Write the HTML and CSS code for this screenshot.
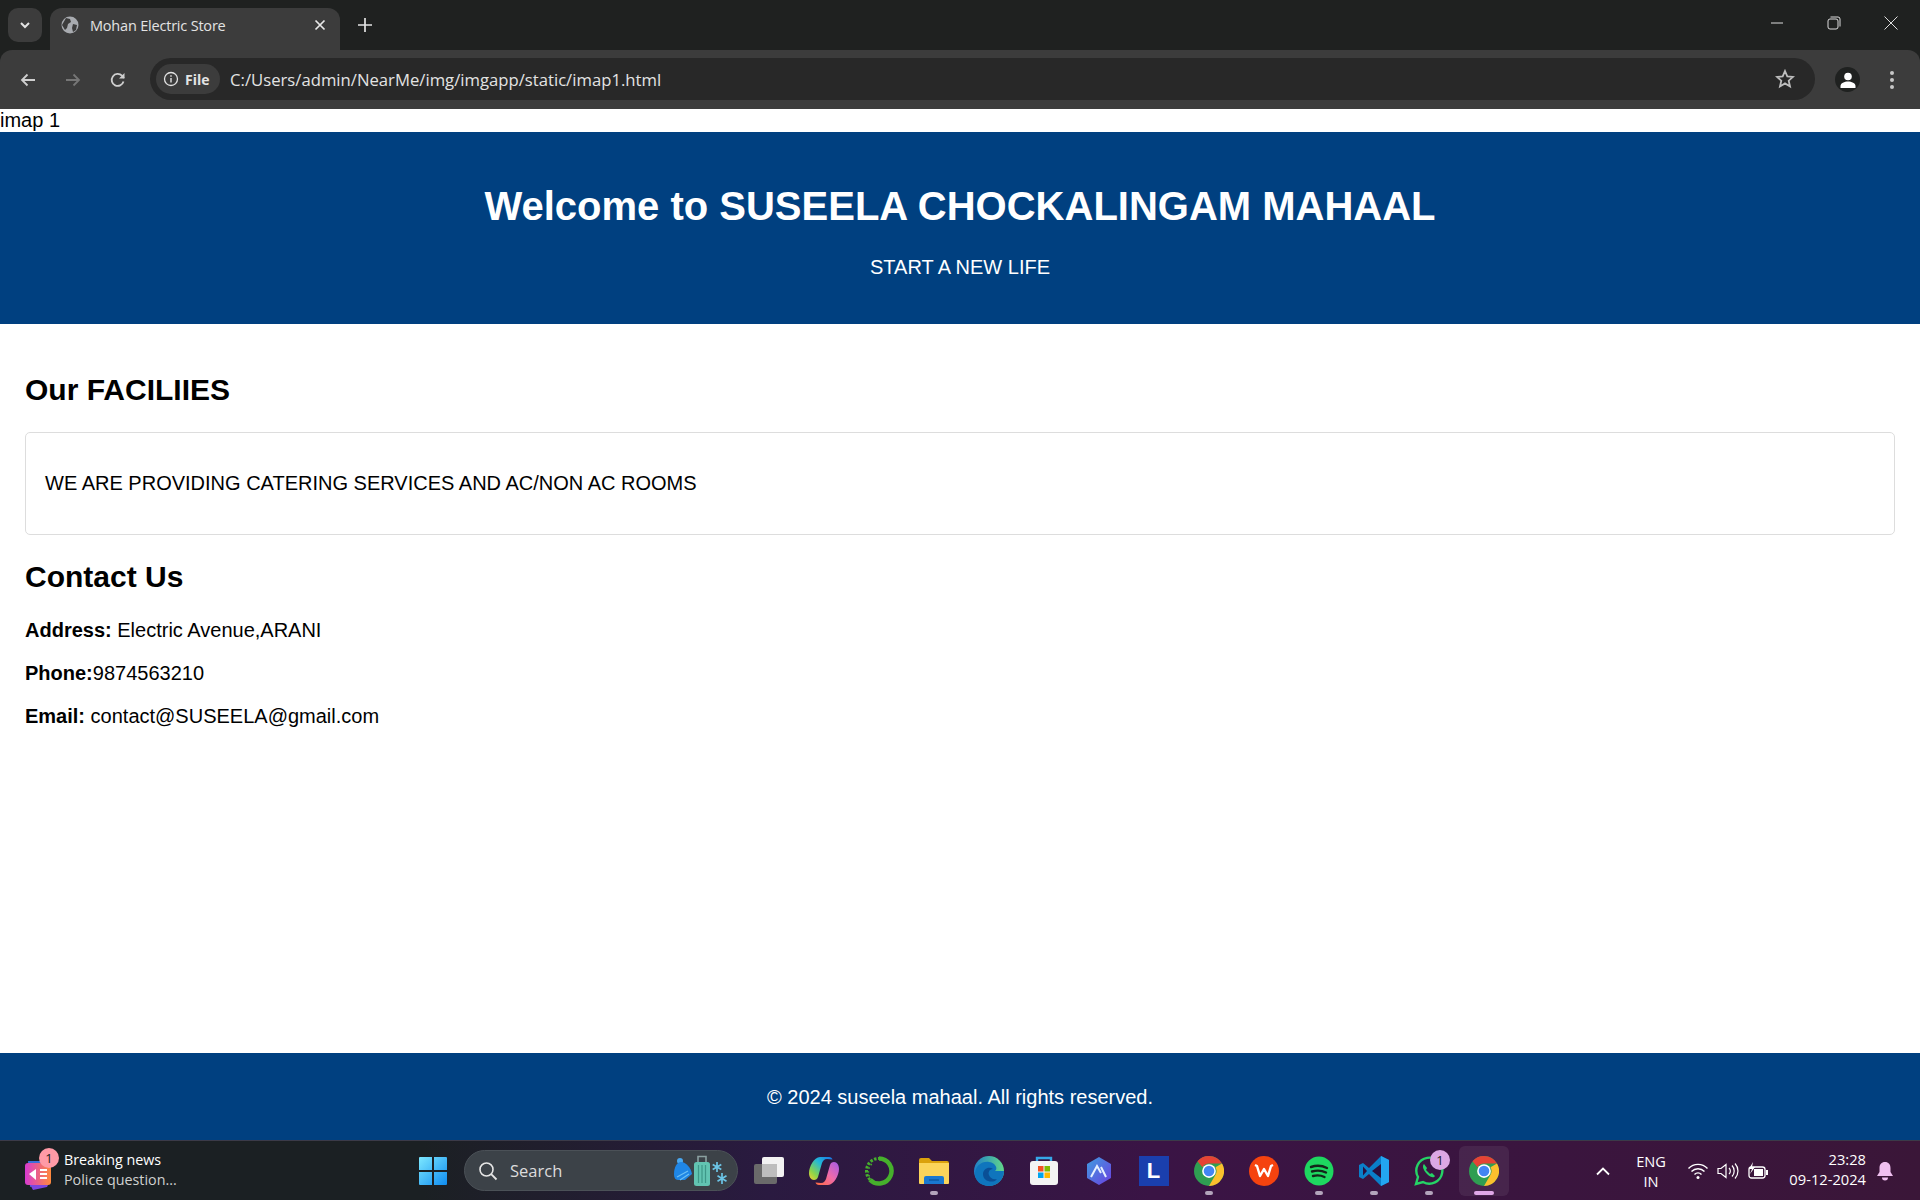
FILE: index.html
```html
<!DOCTYPE html>
<html lang="en">
<head>
<meta charset="utf-8">
<title>Mohan Electric Store</title>
<link rel="stylesheet" href="styles.css">
</head>
<body>
<div class="browser">
  <div class="tabstrip">
    <div class="tabsearch"><svg width="12" height="12" viewBox="0 0 12 12"><path d="M2 4 6 8l4-4" fill="none" stroke="#e3e3e3" stroke-width="2"/></svg></div>
    <div class="tab">
      <svg class="favicon" width="20" height="20" viewBox="0 0 20 20"><circle cx="10" cy="10" r="8.5" fill="#a8abb0"/><path d="M6 3l4 1 1 3-3 2-1 4-2 2-3-5zM13 9l4 1-1 5-3 2-1-4z" fill="#3c3c3c"/></svg>
      <span class="tabtitle">Mohan Electric Store</span>
      <svg width="12" height="12" viewBox="0 0 12 12"><path d="M1.5 1.5l9 9m0-9-9 9" stroke="#e8e8e8" stroke-width="1.7"/></svg>
    </div>
    <div class="newtab"><svg width="14" height="14" viewBox="0 0 14 14"><path d="M7 0v14M0 7h14" stroke="#e3e3e3" stroke-width="1.7"/></svg></div>
    <div class="winctl">
      <svg width="14" height="14" viewBox="0 0 14 14"><path d="M1 7h12" stroke="#ddd" stroke-width="1"/></svg>
      <svg width="14" height="14" viewBox="0 0 14 14"><rect x="1" y="3" width="10" height="10" rx="2" fill="none" stroke="#ddd"/><path d="M3.5 1H11a2 2 0 0 1 2 2v7.5" fill="none" stroke="#ddd"/></svg>
      <svg width="14" height="14" viewBox="0 0 14 14"><path d="M.5.5l13 13m0-13-13 13" stroke="#ddd" stroke-width="1"/></svg>
    </div>
  </div>
  <div class="toolbar">
    <div class="navbtn"><svg width="18" height="18" viewBox="0 0 18 18"><path d="M16 9H3M8.500 3.500 3 9l5.500 5.500" fill="none" stroke="#cfcfcf" stroke-width="1.800"/></svg></div>
    <div class="navbtn"><svg width="18" height="18" viewBox="0 0 18 18"><path d="M2 9h13M9.500 3.500 15 9l-5.500 5.500" fill="none" stroke="#767676" stroke-width="1.800"/></svg></div>
    <div class="navbtn"><svg width="18" height="18" viewBox="0 0 18 18"><path d="M14.500 10.500A6 6 0 1 1 13 4.700L15 7" fill="none" stroke="#cfcfcf" stroke-width="1.800"/><path d="M15.500 2v5.500H10z" fill="#cfcfcf"/></svg></div>
    <div class="omnibox">
      <div class="chip"><svg width="16" height="16" viewBox="0 0 16 16"><circle cx="8" cy="8" r="6.500" fill="none" stroke="#e3e3e3" stroke-width="1.300"/><path d="M8 7v4.500M8 4.200v1.600" stroke="#e3e3e3" stroke-width="1.400"/></svg><span>File</span></div>
      <span class="url">C:/Users/admin/NearMe/img/imgapp/static/imap1.html</span>
      <svg class="star" width="20" height="20" viewBox="0 0 20 20"><path d="M10 2l2.300 5.400 5.700.5-4.300 3.800 1.300 5.700-5-3-5 3 1.300-5.700L2 7.900l5.700-.5z" fill="none" stroke="#bdbdbd" stroke-width="1.800"/></svg>
    </div>
    <div class="avatar"><svg width="18" height="18" viewBox="0 0 18 18"><circle cx="9" cy="5.500" r="3.800" fill="#fff"/><path d="M1.500 17v-2c0-3 4-4.500 7.500-4.500s7.500 1.500 7.500 4.500v2z" fill="#fff"/></svg></div>
    <div class="kebab"><i></i><i></i><i></i></div>
  </div>
</div>

<div class="page">
  <div class="imap">imap 1</div>
  <header class="hero">
    <h1>Welcome to SUSEELA CHOCKALINGAM MAHAAL</h1>
    <p>START A NEW LIFE</p>
  </header>
  <main class="content">
    <h2 class="first">Our FACILIIES</h2>
    <div class="card"><p>WE ARE PROVIDING CATERING SERVICES AND AC/NON AC ROOMS</p></div>
    <h2 class="contact">Contact Us</h2>
    <p class="line"><strong>Address:</strong> Electric Avenue,ARANI</p>
    <p class="line"><strong>Phone:</strong>9874563210</p>
    <p class="line"><strong>Email:</strong> contact@SUSEELA@gmail.com</p>
  </main>
  <footer class="foot"><p>© 2024 suseela mahaal. All rights reserved.</p></footer>
</div>

<div class="taskbar">
  <div class="news">
    <div class="newsicon">
      <svg width="30" height="36" viewBox="0 0 30 36"><path d="M4 6h14v22L6 32z" fill="#3a6fd8"/><path d="M3 24h24l-4 8-14 3z" fill="#7a46e0"/><rect x="1" y="8" width="26" height="22" rx="3" fill="url(#ng)"/><path d="M5 19l7-5v11z" fill="#fff"/><path d="M16 15h7M16 19h7M16 23h7" stroke="#fff" stroke-width="2"/><defs><linearGradient id="ng" x1="0" x2="1"><stop offset="0" stop-color="#d63ad0"/><stop offset="1" stop-color="#ff8a3c"/></linearGradient></defs></svg>
      <span class="newsbadge">1</span>
    </div>
    <div class="newstext"><span>Breaking news</span><span class="dim">Police question...</span></div>
  </div>
  <div class="centre">
    <svg class="winlogo" width="30" height="30" viewBox="0 0 30 30"><defs><linearGradient id="wg" x1="0" y1="0" x2="1" y2="1"><stop offset="0" stop-color="#7de8ff"/><stop offset="1" stop-color="#0f8cf0"/></linearGradient></defs><path d="M1 2a1 1 0 0 1 1-1h12v13H1zM16 1h12a1 1 0 0 1 1 1v12H16zM1 16h13v13H2a1 1 0 0 1-1-1zM16 16h13v12a1 1 0 0 1-1 1H16z" fill="url(#wg)"/></svg>
    <div class="search">
      <svg width="20" height="20" viewBox="0 0 20 20"><circle cx="8.500" cy="8.500" r="6.500" fill="none" stroke="#e6e6e6" stroke-width="1.600"/><path d="M13.200 13.200 18.500 18.500" stroke="#e6e6e6" stroke-width="1.800"/></svg>
      <span>Search</span>
      <svg class="searchart" width="56" height="32" viewBox="0 0 56 32"><circle cx="7" cy="6" r="3" fill="#4aa8f0"/><path d="M1 19c0-7 3-12 7-12 5 0 10 6 11 12l-7 6H5c-3 0-4-3-4-6z" fill="#1f86e6"/><path d="M4 22l11-6M7 25l9-6" stroke="#6cc0f5" stroke-width="1.200"/><rect x="21" y="7" width="16" height="24" rx="2.500" fill="#62c4b2"/><path d="M25 7V1.500h8V7" fill="none" stroke="#8aa0a0" stroke-width="1.600"/><path d="M25.500 10v18M29 10v18M32.500 10v18" stroke="#3d9788" stroke-width="1.200"/><path d="M44 7v10M39.700 9.500l8.600 5M48.300 9.500l-8.600 5M49 18v11M44.500 20.800l9 5.400M53.500 20.800l-9 5.400" stroke="#6cc4e6" stroke-width="1.700"/></svg>
    </div>
    <div class="apps">
      <div class="app"><svg width="30" height="30" viewBox="0 0 30 30"><rect x="0" y="8" width="23" height="20" rx="2" fill="#6a6a6a"/><rect x="8" y="1" width="22" height="20" rx="2" fill="#f2f2f2"/><rect x="8" y="8" width="15" height="13" fill="#bdbdbd"/></svg></div>
      <div class="app"><svg width="30" height="30" viewBox="0 0 30 30"><defs><linearGradient id="cop1" x1="1" y1="0" x2="0" y2="1"><stop offset="0" stop-color="#1b74e8"/><stop offset=".4" stop-color="#22b8d8"/><stop offset=".75" stop-color="#8bd34a"/><stop offset="1" stop-color="#f5d130"/></linearGradient><linearGradient id="cop2" x1="1" y1="0" x2="0" y2="1"><stop offset="0" stop-color="#a45be8"/><stop offset=".5" stop-color="#f06ba8"/><stop offset="1" stop-color="#ff6a3c"/></linearGradient></defs><path d="M11 1h9c2 0 3 1 3.500 2.500L18 3c-3 0-4 2-5 4l-4 14c-.6 2-2 3-4 3-3 0-5-3-5-7 0-6 5-16 11-16z" fill="url(#cop1)"/><path d="M19 29h-9c-2 0-3-1-3.500-2.500L12 27c3 0 4-2 5-4l4-14c.6-2 2-3 4-3 3 0 5 3 5 7 0 6-5 16-11 16z" fill="url(#cop2)"/></svg></div>
      <div class="app"><svg width="30" height="30" viewBox="0 0 30 30"><path d="M15 2.500A12.500 12.500 0 1 1 6 23.700" fill="none" stroke="#46b02c" stroke-width="4.500"/><path d="M6 23.700A12.500 12.500 0 0 1 15 2.500" fill="none" stroke="#46b02c" stroke-width="3" stroke-dasharray="2.500 1.500"/><path d="M5.500 20.500A10.500 10.500 0 0 1 9 7" fill="none" stroke="#46b02c" stroke-width="1.600" stroke-dasharray="1.500 2.500"/></svg></div>
      <div class="app"><svg width="30" height="30" viewBox="0 0 30 30"><path d="M0 4a2 2 0 0 1 2-2h8l3 3h15a2 2 0 0 1 2 2v4H0z" fill="#dba10c"/><path d="M0 7h30v20a1 1 0 0 1-1 1H1a1 1 0 0 1-1-1z" fill="#fbd45a"/><path d="M5 28v-6a2 2 0 0 1 2-2h16a2 2 0 0 1 2 2v6z" fill="#1a78d0"/><path d="M10 24h10" stroke="#0d5aa5" stroke-width="1.500"/></svg><i class="dot"></i></div>
      <div class="app"><svg width="30" height="30" viewBox="0 0 30 30"><defs><linearGradient id="edg" x1="0" y1="0" x2="1" y2="0"><stop offset="0" stop-color="#1f7fc8"/><stop offset="1" stop-color="#62d78a"/></linearGradient></defs><circle cx="15" cy="15" r="15" fill="url(#edg)"/><path d="M1 18C1 10 8 5 15 6c7 1 9 7 6 9h9c0 8-6 15-15 15C7 30 1 25 1 18z" fill="#0f75bd"/><path d="M21 25c-6 2-12-1-12-7 0-5 6-8 10-5-4 0-5 4-4 6 1 3 4 5 8 4z" fill="#0a4f96"/></svg></div>
      <div class="app"><svg width="30" height="30" viewBox="0 0 30 30"><path d="M8 6V2h14v4" fill="none" stroke="#35a8e8" stroke-width="2.400"/><rect x="1" y="5" width="28" height="24" rx="3" fill="#f3f3f3"/><rect x="9" y="10" width="5.500" height="5.500" fill="#f25022"/><rect x="15.500" y="10" width="5.500" height="5.500" fill="#7fba00"/><rect x="9" y="16.500" width="5.500" height="5.500" fill="#00a4ef"/><rect x="15.500" y="16.500" width="5.500" height="5.500" fill="#ffb900"/></svg></div>
      <div class="app"><svg width="30" height="30" viewBox="0 0 30 30"><defs><linearGradient id="hx" x1="0" y1="0" x2="1" y2="1"><stop offset="0" stop-color="#3f9ee0"/><stop offset="1" stop-color="#6a3fe0"/></linearGradient></defs><path d="M15 1l12 7v14l-12 7-12-7V8z" fill="url(#hx)"/><path d="M7 21l6-11 4 7M17 11l5 10" fill="none" stroke="#e6f0ff" stroke-width="2"/></svg></div>
      <div class="app"><div class="lapp">L</div></div>
      <div class="app"><svg width="30" height="30" viewBox="0 0 48 48"><use href="#chrome"/></svg><i class="dot"></i></div>
      <div class="app"><svg width="30" height="30" viewBox="0 0 30 30"><circle cx="15" cy="15" r="15" fill="#f5430f"/><path d="M6 9l2 1 3 10 4-7 4 7 3-10 2-1" fill="none" stroke="#fff" stroke-width="2.400" stroke-linejoin="round"/></svg></div>
      <div class="app"><svg width="30" height="30" viewBox="0 0 30 30"><circle cx="15" cy="15" r="14.500" fill="#1ed760"/><path d="M7 11c6-2 11-1.500 16 1M8 15.500c5-1.500 10-1 14 1M9 20c4-1 8-.7 11.500 1" fill="none" stroke="#14261a" stroke-width="2.400" stroke-linecap="round"/></svg><i class="dot"></i></div>
      <div class="app"><svg width="30" height="30" viewBox="0 0 30 30"><path d="M22 0l8 4v22l-8 4-12-12-6 5-4-2V9l4-2 6 5z" fill="#0a7fc9"/><path d="M22 0l8 4v22l-8 4z" fill="#23a6f0"/><path d="M22 8v14l-9-7z" fill="#2a0f3e"/><path d="M4 10.500 8 15l-4 4.500z" fill="#2a0f3e"/></svg><i class="dot"></i></div>
      <div class="app"><svg width="30" height="30" viewBox="0 0 30 30"><path d="M2 28l2-7A13 13 0 1 1 9 26z" fill="none" stroke="#25d366" stroke-width="2.400"/><path d="M10 8c-2 2-1 6 3 10s7 4 8 2l-3-3-2 1-4-4 1-2z" fill="#25d366"/></svg><span class="appbadge">1</span><i class="dot"></i></div>
      <div class="app active"><svg width="30" height="30" viewBox="0 0 48 48"><use href="#chrome"/></svg><i class="dot wide"></i></div>
    </div>
  </div>
  <div class="tray">
    <svg width="16" height="10" viewBox="0 0 16 10"><path d="M2 8.500 8 2.500l6 6" fill="none" stroke="#fff" stroke-width="1.800"/></svg>
    <div class="lang"><span>ENG</span><span>IN</span></div>
    <div class="sys">
      <svg width="22" height="18" viewBox="0 0 22 18"><path d="M1.500 6.500a13 13 0 0 1 19 0M4.500 9.500a9 9 0 0 1 13 0M7.500 12.500a5 5 0 0 1 7 0" fill="none" stroke="#fff" stroke-width="1.400"/><circle cx="11" cy="15.500" r="1.500" fill="#fff"/></svg>
      <svg width="22" height="18" viewBox="0 0 22 18"><path d="M1 6.500h3L9 2.500v13l-5-4H1z" fill="none" stroke="#fff" stroke-width="1.200"/><path d="M12 6a4 4 0 0 1 0 6M15 3.500a8 8 0 0 1 0 11M18 1.500a11 11 0 0 1 0 15" fill="none" stroke="#fff" stroke-width="1.200"/></svg>
      <svg width="22" height="18" viewBox="0 0 22 18"><rect x="2" y="5" width="16" height="11" rx="2.500" fill="none" stroke="#fff" stroke-width="1.300"/><rect x="7" y="7" width="9" height="7" fill="#fff"/><rect x="19" y="8" width="2" height="5" fill="#fff"/><path d="M6 0 2 7h3l-2 5 5-7H5z" fill="#fff"/></svg>
    </div>
    <div class="clock"><span>23:28</span><span>09-12-2024</span></div>
    <svg class="bell" width="18" height="20" viewBox="0 0 18 20"><path d="M9 1c3.500 0 5.500 2.500 5.500 6v4l2.500 4H1l2.500-4V7C3.500 3.500 5.500 1 9 1z" fill="#f0bff0"/><path d="M6 16.500h6a3 3 0 0 1-6 0z" fill="#f0bff0"/></svg>
  </div>
</div>

<svg class="defs" width="0" height="0"><defs><g id="chrome"><circle cx="24" cy="24" r="24" fill="#2f9e52"/><path d="M24 0a24 24 0 0 1 20.800 12H24a12 12 0 0 0-10.400 6L5.500 8.500A24 24 0 0 1 24 0z" fill="#e54335"/><path d="M44.800 12A24 24 0 0 1 24 48l10.400-18A12 12 0 0 0 34.400 18z" fill="#fbc02d"/><circle cx="24" cy="24" r="11" fill="#fff"/><circle cx="24" cy="24" r="8.500" fill="#4285f4"/></g></defs></svg>
</body>
</html>
```
FILE: styles.css
```css
* { box-sizing: border-box; }
html, body { margin: 0; padding: 0; }
body {
  width: 1920px;
  height: 1200px;
  overflow: hidden;
  display: flex;
  flex-direction: column;
  background: #fff;
  color: #000;
  font-family: "Liberation Sans", Arial, sans-serif;
  font-size: 20px;
}
.defs { position: absolute; }

/* browser chrome */
.browser { flex: none; background: #1f2120; font-family: "Open Sans", "Noto Sans", sans-serif; }
.tabstrip { height: 50px; display: flex; align-items: flex-start; padding: 8px 0 0 8px; }
.tabsearch { width: 34px; height: 34px; margin-right: 8px; border-radius: 10px; background: #3c3c3c; display: flex; align-items: center; justify-content: center; }
.tab { width: 290px; height: 42px; background: #3c3c3c; border-radius: 12px 12px 0 0; display: flex; align-items: center; gap: 10px; padding: 0 14px 8px 10px; }
.tabtitle { flex: 1; color: #e3e3e3; font-size: 14.500px; letter-spacing: -.2px; white-space: nowrap; }
.newtab { width: 50px; height: 34px; display: flex; align-items: center; justify-content: center; }
.winctl { margin-left: auto; display: flex; align-items: center; height: 34px; margin-top: -2px; padding-right: 1px; }
.winctl svg { margin: 0 21px 0 22px; }
.toolbar { height: 59px; background: #3c3c3c; border-radius: 12px 12px 0 0; display: flex; align-items: center; padding: 0 13px 0 0; }
.navbtn { width: 45px; height: 40px; display: flex; align-items: center; justify-content: center; }
.navbtn:first-child { margin-left: 5px; }
.omnibox { flex: 1; height: 42px; margin: 0 0 1px 10px; border-radius: 21px; background: #282828; display: flex; align-items: center; padding: 0 20px 0 6px; }
.chip { width: 64px; height: 30px; padding: 0 0 0 7px; border-radius: 15px; background: #3c3c3c; display: flex; align-items: center; gap: 6px; color: #e3e3e3; font-size: 14px; font-weight: 700; }
.url { flex: 1; margin-left: 10px; color: #e3e3e3; font-size: 16.700px; white-space: nowrap; }
.avatar { width: 25px; height: 25px; margin-left: 20px; border-radius: 50%; background: #1f2120; display: flex; align-items: center; justify-content: center; overflow: hidden; }
.kebab { width: 30px; margin-left: 17px; display: flex; flex-direction: column; align-items: center; gap: 3px; }
.kebab i { width: 4px; height: 4px; border-radius: 50%; background: #c7c7c7; }

/* page */
.page { flex: 1; min-height: 0; display: flex; flex-direction: column; }
.imap { height: 23px; line-height: 23px; }
.hero { height: 192px; background: #004080; color: #fff; text-align: center; padding-top: 51px; }
.hero h1 { margin: 0; font-size: 40px; line-height: 46px; font-weight: 700; }
.hero p { margin: 27px 0 0; line-height: 23px; }
.content { flex: 1; padding: 0 25px; }
.content h2 { margin: 25px 0 25px; font-size: 30px; line-height: 35px; font-weight: 700; }
.content h2.first { margin-top: 48px; }
.content h2.contact { margin-top: 24px; }
.card { height: 103px; padding: 0 19px; border: 1px solid #ddd; border-radius: 5px; display: flex; align-items: center; }
.card p { margin: 0; }
.line { margin: 0 0 20px; line-height: 23px; }
.foot { height: 87px; padding-top: 2px; background: #004080; color: #fff; text-align: center; display: flex; align-items: center; justify-content: center; }
.foot p { margin: 0; }

/* taskbar */
.taskbar { flex: none; height: 60px; position: relative; display: flex; align-items: center; border-top: 1px solid #3b3a48; background: linear-gradient(90deg, #1b2023 0%, #1b2023 22%, #2a1a40 40%, #3a1445 60%, #3a1638 100%); font-family: "Open Sans", "Noto Sans", sans-serif; color: #fff; }
.news { width: 418px; flex: none; display: flex; align-items: center; padding-left: 24px; }
.newsicon { position: relative; width: 30px; height: 40px; margin-right: 10px; display: flex; align-items: flex-end; }
.newsbadge { position: absolute; left: 15px; top: -3px; width: 20px; height: 20px; border-radius: 50%; background: #ff9aa6; color: #222; font-size: 13px; line-height: 20px; text-align: center; }
.newstext { display: flex; flex-direction: column; margin-top: -2px; font-size: 14.300px; line-height: 20px; }
.newstext .dim { color: #d0d0d0; }
.centre { display: flex; align-items: center; }
.winlogo { margin-right: 16px; }
.search { width: 274px; height: 41px; border-radius: 21px; background: #3c4248; border: 1px solid #4b5157; display: flex; align-items: center; padding: 0 8px 0 13px; gap: 12px; font-size: 16.500px; color: #dcdcdc; }
.search span { flex: 1; }
.apps { display: flex; align-items: center; margin-left: 3px; }
.app { position: relative; width: 55px; height: 50px; display: flex; align-items: center; justify-content: center; }
.app.active { background: rgba(255,255,255,.07); border-radius: 6px; width: 50px; margin-left: 3px; }
.dot { position: absolute; left: 50%; bottom: 1px; width: 8px; height: 4px; margin-left: -4px; border-radius: 2px; background: #b3a4bb; }
.dot.wide { width: 20px; margin-left: -10px; background: #e0a8e8; }
.lapp { width: 30px; height: 30px; background: #1a3fae; color: #fff; font-family: "Liberation Sans", sans-serif; font-size: 22px; font-weight: 700; line-height: 30px; text-align: center; }
.appbadge { position: absolute; top: 4px; right: 6px; width: 20px; height: 20px; border-radius: 50%; background: #dca8e4; color: #222; font-size: 13px; line-height: 20px; text-align: center; }
.tray { margin-left: auto; display: flex; align-items: center; padding-right: 26px; }
.lang { margin-left: 22px; width: 36px; display: flex; flex-direction: column; align-items: center; font-size: 14.600px; line-height: 20px; }
.sys { margin-left: 18px; display: flex; gap: 8px; align-items: center; }
.clock { margin-left: 13px; margin-top: -3px; width: 84px; display: flex; flex-direction: column; align-items: flex-end; font-size: 14.700px; line-height: 20px; white-space: nowrap; }
.bell { margin-left: 10px; }
```
